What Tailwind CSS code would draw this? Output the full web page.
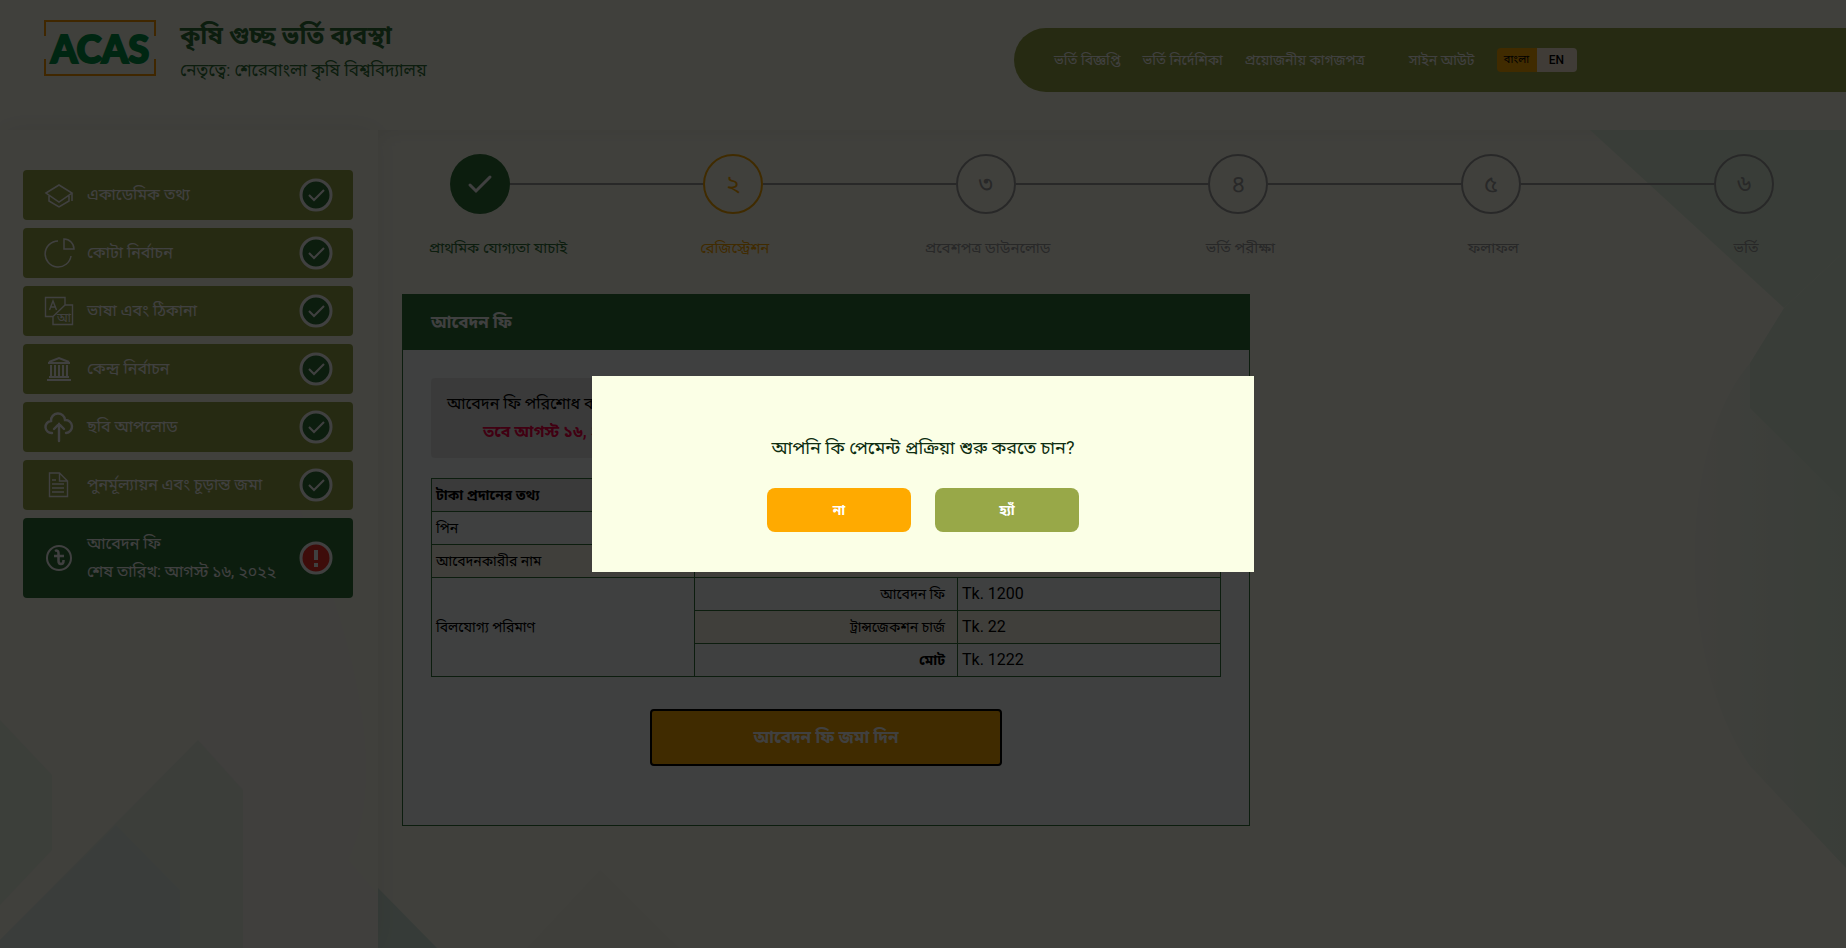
<!DOCTYPE html>
<html lang="bn">
<head>
    <meta charset="UTF-8">
    <meta name="viewport" content="width=device-width, initial-scale=1.0">
    <title>কৃষি গুচ্ছ ভর্তি ব্যবস্থা</title>
    <script src="https://cdn.jsdelivr.net/npm/@tailwindcss/browser@4"></script>
</head>
<body class="min-h-screen flex flex-col bg-[#fffff0] text-black font-[Roboto,'Noto_Sans_Bengali','Noto_Sans',sans-serif]">

    <!-- Shared icons -->
    <svg class="hidden">
        <symbol id="tick" viewBox="0 0 34 34">
            <circle cx="17" cy="17" r="15" fill="#33743b" stroke="#fff" stroke-width="3"/>
            <path d="M10 17l5 5 10-10" fill="none" stroke="#fff" stroke-width="2"/>
        </symbol>
    </svg>

    <!-- Header -->
    <header class="flex justify-between items-start h-[130px] bg-[#fffff0]">
        <a href="#" class="flex items-start pl-11 pt-4 gap-6">
            <svg class="w-28 h-14 mt-1" viewBox="0 0 112 56">
                <path d="M1 16V1H111V16M1 39V55H111V39" fill="none" stroke="#ff9a00" stroke-width="2"/>
                <text x="56" y="43" text-anchor="middle" font-family="Lato" font-weight="900" font-size="38" fill="#00984a" stroke="#00984a" stroke-width="2">ACAS</text>
            </svg>
            <div class="text-[#33743b]">
                <h1 class="text-[25px] leading-10 font-bold">কৃষি গুচ্ছ ভর্তি ব্যবস্থা</h1>
                <p class="text-[17px] leading-7">নেতৃত্বে: শেরেবাংলা কৃষি বিশ্ববিদ্যালয়</p>
            </div>
        </a>
        <nav class="flex items-center w-[832px] h-16 mt-7 pl-10 rounded-l-[32px] bg-[#98a848] text-sm text-white">
            <a href="#" class="mr-[22px]">ভর্তি বিজ্ঞপ্তি</a>
            <a href="#" class="mr-[22px]">ভর্তি নির্দেশিকা</a>
            <a href="#" class="mr-11">প্রয়োজনীয় কাগজপত্র</a>
            <a href="#" class="mr-[22px]">সাইন আউট</a>
            <div class="flex h-6 rounded overflow-hidden text-black">
                <button class="w-10 bg-[#ffaa00] text-[11px]">বাংলা</button>
                <button class="w-10 bg-[#fff0dc] text-xs font-medium">EN</button>
            </div>
        </nav>
    </header>

    <div class="flex flex-1">
        <!-- Sidebar -->
        <aside class="relative z-10 w-[378px] shrink-0 pl-[23px] pr-[25px] pt-10 bg-[#fffdf0] shadow-[0_0_28px_rgba(0,0,0,0.08)] text-base text-white">
            <svg class="absolute inset-0 w-full h-full" viewBox="0 0 378 818" preserveAspectRatio="none">
                <path d="M300 380Q400 620 348 730L378 765V818H200V380z" fill="#fdf9f2"/>
                <path d="M0 590L52 645V720L0 775z" fill="#eefae6"/>
                <path d="M198 610L243 660V818H0V810z" fill="#f0f8e8"/>
                <path d="M116 695L180 760V818H0V810z" fill="#e8f4ea"/>
            </svg>
            <ul class="relative flex flex-col gap-2">
                <li><a href="#" class="flex items-center h-[50px] px-5 rounded bg-[#98a848]">
                    <svg class="w-8 h-8 mr-3" viewBox="0 0 32 32" fill="none" stroke="#fff" stroke-width="1.500"><path d="M3 14L16 6l13 8-13 9zM6 17v5l10 6 10-6v-5M29 14v8"/></svg>
                    <span class="flex-1">একাডেমিক তথ্য</span>
                    <svg class="w-[34px] h-[34px]"><use href="#tick"/></svg>
                </a></li>
                <li><a href="#" class="flex items-center h-[50px] px-5 rounded bg-[#98a848]">
                    <svg class="w-8 h-8 mr-3" viewBox="0 0 32 32" fill="none" stroke="#fff" stroke-width="1.500"><path d="M15 4A13 13 0 1 0 28 19M21 2v10h10A10 10 0 0 0 21 2z"/></svg>
                    <span class="flex-1">কোটা নির্বাচন</span>
                    <svg class="w-[34px] h-[34px]"><use href="#tick"/></svg>
                </a></li>
                <li><a href="#" class="flex items-center h-[50px] px-5 rounded bg-[#98a848]">
                    <svg class="w-8 h-8 mr-3" viewBox="0 0 32 32" fill="none" stroke="#fff" stroke-width="1.400"><path d="M10 21.500H2.500V2.500H22V10M22 10h7.500v19.500H10V21.500L22 10M6.500 15l3.500-9 3.500 9M8 12h5"/><text x="14" y="27" font-size="12" fill="#fff" stroke="none">আ</text></svg>
                    <span class="flex-1">ভাষা এবং ঠিকানা</span>
                    <svg class="w-[34px] h-[34px]"><use href="#tick"/></svg>
                </a></li>
                <li><a href="#" class="flex items-center h-[50px] px-5 rounded bg-[#98a848]">
                    <svg class="w-8 h-8 mr-3" viewBox="0 0 32 32" fill="none" stroke="#fff" stroke-width="2"><path d="M5 10h22M6 9l10-4 10 4M4 27h24M6 24h20M8 12v12M12 12v12M16 12v12M20 12v12M24 12v12"/></svg>
                    <span class="flex-1">কেন্দ্র নির্বাচন</span>
                    <svg class="w-[34px] h-[34px]"><use href="#tick"/></svg>
                </a></li>
                <li><a href="#" class="flex items-center h-[50px] px-5 rounded bg-[#98a848]">
                    <svg class="w-8 h-8 mr-3" viewBox="0 0 32 32" fill="none" stroke="#fff" stroke-width="2.400" stroke-linecap="round"><path d="M9 22a6 6 0 0 1-1-12 7 7 0 0 1 14-1 6.500 6.500 0 0 1 1 13M16 30V13M11 18l5-5 5 5"/></svg>
                    <span class="flex-1">ছবি আপলোড</span>
                    <svg class="w-[34px] h-[34px]"><use href="#tick"/></svg>
                </a></li>
                <li><a href="#" class="flex items-center h-[50px] px-5 rounded bg-[#98a848]">
                    <svg class="w-8 h-8 mr-3" viewBox="0 0 32 32" fill="none" stroke="#fff" stroke-width="1.400"><path d="M6.500 4h10l8 8v15.500h-18zM16.500 4v8h8M9 11h4M9 15h12M9 19h12M9 23h12"/></svg>
                    <span class="flex-1">পুনর্মূল্যায়ন এবং চূড়ান্ত জমা</span>
                    <svg class="w-[34px] h-[34px]"><use href="#tick"/></svg>
                </a></li>
                <li><a href="#" class="flex items-center h-20 px-5 rounded bg-[#33743b]">
                    <svg class="w-8 h-8 mr-3" viewBox="0 0 32 32" fill="none" stroke="#fff" stroke-width="2"><circle cx="16" cy="16" r="12"/><path d="M12 9c2-1 3.500 0 3.500 2v8c0 4 5 4 5 0v-1M11 14h10" stroke-width="2.500"/></svg>
                    <span class="flex-1 leading-7">আবেদন ফি<br>শেষ তারিখ: আগস্ট ১৬, ২০২২</span>
                    <svg class="w-[34px] h-[34px]" viewBox="0 0 34 34"><circle cx="17" cy="17" r="15" fill="#f83028" stroke="#fff" stroke-width="3"/><path d="M17 9v10M17 22v4" stroke="#fff" stroke-width="4"/></svg>
                </a></li>
            </ul>
        </aside>

        <!-- Content -->
        <main class="relative flex-1 overflow-hidden pl-6 pt-6 shadow-[inset_0_16px_16px_-12px_rgba(0,0,0,0.06)]">
            <svg class="absolute inset-0 w-full h-full" viewBox="0 0 1468 818" preserveAspectRatio="none">
                <defs>
                    <linearGradient id="fade"><stop offset="0" stop-color="#fcfcee"/><stop offset="1" stop-color="#e4f4e0"/></linearGradient>
                </defs>
                <path d="M1372 233C1298 320 1298 530 1372 636L1468 738V233z" fill="url(#fade)"/>
                <path d="M1212 0H1468V120L1406 178z" fill="#e4f4de"/>
                <path d="M1468 120L1406 178 1372 233V278L1468 373z" fill="#e2f2de"/>
                <path d="M0 758L59 818H0z" fill="#d8ecdf"/>
                <path d="M149 818L222 740 301 818z" fill="#fafaea"/>
            </svg>

            <ol class="relative flex pl-12 pr-[72px] text-[15px] leading-7 text-[#a0a0a0]">
                <li class="flex-1">
                    <div class="flex items-center">
                        <span class="flex items-center justify-center w-[60px] h-[60px] rounded-full bg-[#33743b]"><svg class="w-8 h-8" viewBox="0 0 32 32" fill="none" stroke="#fff" stroke-width="3" stroke-linecap="round"><path d="M6 17l6 6L26 9"/></svg></span>
                        <span class="flex-1 h-0.5 bg-[#a0a0a0]"></span>
                    </div>
                    <div class="flex justify-center w-[60px] pl-9 mt-5 whitespace-nowrap text-[#33743b]">প্রাথমিক যোগ্যতা যাচাই</div>
                </li>
                <li class="flex-1">
                    <div class="flex items-center">
                        <span class="flex items-center justify-center w-[60px] h-[60px] rounded-full border-2 border-[#ffaa00] text-2xl text-[#ffaa00]">২</span>
                        <span class="flex-1 h-0.5 bg-[#a0a0a0]"></span>
                    </div>
                    <div class="flex justify-center w-16 mt-5 whitespace-nowrap text-[#ffaa00]">রেজিস্ট্রেশন</div>
                </li>
                <li class="flex-1">
                    <div class="flex items-center">
                        <span class="flex items-center justify-center w-[60px] h-[60px] rounded-full border-2 border-[#a0a0a0] text-2xl">৩</span>
                        <span class="flex-1 h-0.5 bg-[#a0a0a0]"></span>
                    </div>
                    <div class="flex justify-center w-16 mt-5 whitespace-nowrap">প্রবেশপত্র ডাউনলোড</div>
                </li>
                <li class="flex-1">
                    <div class="flex items-center">
                        <span class="flex items-center justify-center w-[60px] h-[60px] rounded-full border-2 border-[#a0a0a0] text-2xl">৪</span>
                        <span class="flex-1 h-0.5 bg-[#a0a0a0]"></span>
                    </div>
                    <div class="flex justify-center w-16 mt-5 whitespace-nowrap">ভর্তি পরীক্ষা</div>
                </li>
                <li class="flex-1">
                    <div class="flex items-center">
                        <span class="flex items-center justify-center w-[60px] h-[60px] rounded-full border-2 border-[#a0a0a0] text-2xl">৫</span>
                        <span class="flex-1 h-0.5 bg-[#a0a0a0]"></span>
                    </div>
                    <div class="flex justify-center w-16 mt-5 whitespace-nowrap">ফলাফল</div>
                </li>
                <li class="w-[60px]">
                    <span class="flex items-center justify-center w-[60px] h-[60px] rounded-full border-2 border-[#a0a0a0] text-2xl">৬</span>
                    <div class="flex justify-center w-16 mt-5 whitespace-nowrap">ভর্তি</div>
                </li>
            </ol>

            <section class="relative max-w-[848px] min-h-[532px] mt-8 border border-[#33743b] bg-[#faffff]">
                <h2 class="flex items-center h-[55px] pl-7 bg-[#33743b] text-[17px] font-bold text-white">আবেদন ফি</h2>
                <div class="px-7 pt-7">
                    <div class="h-20 px-4 pt-3 rounded bg-[#e8e8e8] text-base leading-7">
                        <p>আবেদন ফি পরিশোধ করতে</p>
                        <p class="pl-9 font-bold text-[#ff0048]">তবে আগস্ট ১৬, ২০২২</p>
                    </div>
                    <table class="w-full mt-5 table-fixed border-collapse text-sm text-black [&_td]:border [&_td]:border-[#33743b] [&_td]:px-1">
                        <tbody>
                            <tr class="h-[33px]"><th colspan="3" class="border border-[#33743b] bg-[#e8e8e8] px-1 text-left">টাকা প্রদানের তথ্য</th></tr>
                            <tr class="h-[33px]"><td>পিন</td><td colspan="2"></td></tr>
                            <tr class="h-[33px] bg-[#fffcea]"><td>আবেদনকারীর নাম</td><td colspan="2"></td></tr>
                            <tr class="h-[33px]"><td rowspan="3">বিলযোগ্য পরিমাণ</td><td class="text-right"><span class="pr-2">আবেদন ফি</span></td><td class="text-base">Tk. 1200</td></tr>
                            <tr class="h-[33px] bg-[#fffcea]"><td class="text-right"><span class="pr-2">ট্রান্সজেকশন চার্জ</span></td><td class="text-base">Tk. 22</td></tr>
                            <tr class="h-[33px]"><td class="text-right font-bold"><span class="pr-2">মোট</span></td><td class="text-base">Tk. 1222</td></tr>
                        </tbody>
                    </table>
                    <button class="block w-[352px] h-[57px] mx-auto mt-8 rounded border-2 border-black bg-[#ffaa00] text-[17px] font-bold text-white">আবেদন ফি জমা দিন</button>
                </div>
            </section>
        </main>
    </div>

    <!-- Confirm dialog -->
    <div class="fixed inset-0 z-20 flex items-center justify-center bg-black/75">
        <div role="dialog" class="w-[662px] pt-14 pb-10 bg-[#fbffe6] text-center">
            <p class="text-lg leading-8 text-[#0d2d10]">আপনি কি পেমেন্ট প্রক্রিয়া শুরু করতে চান?</p>
            <div class="flex justify-center gap-6 mt-6 text-sm font-bold text-white">
                <button class="w-36 h-11 rounded-lg bg-[#ffaa00]">না</button>
                <button class="w-36 h-11 rounded-lg bg-[#98a848]">হ্যাঁ</button>
            </div>
        </div>
    </div>
</body>
</html>
